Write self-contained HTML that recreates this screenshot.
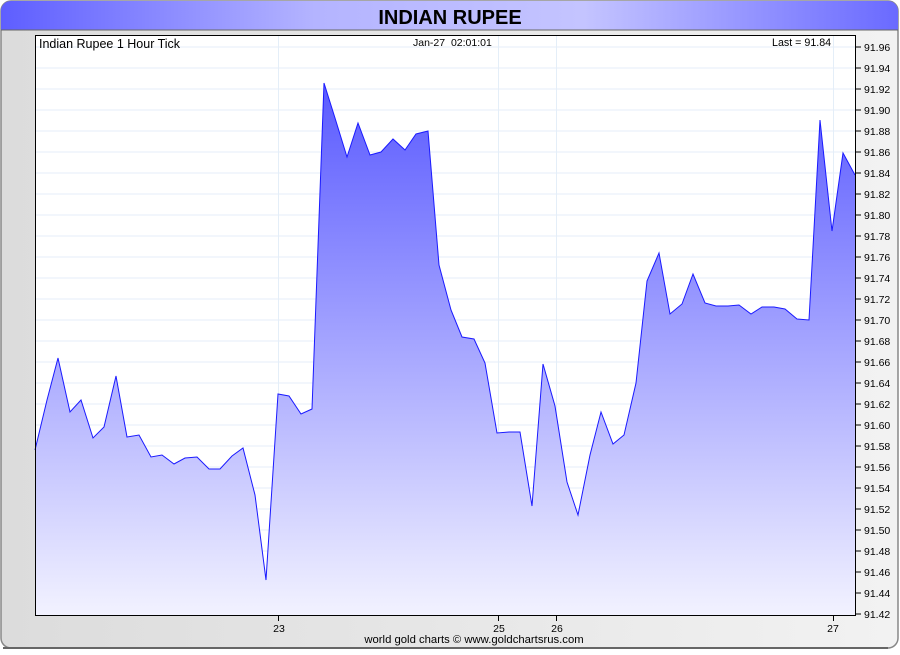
<!DOCTYPE html>
<html><head><meta charset="utf-8"><style>
body{margin:0;width:900px;height:650px;background:#fff;font-family:"Liberation Sans",sans-serif;overflow:hidden}
</style></head><body>
<svg width="900" height="650" xmlns="http://www.w3.org/2000/svg" font-family="Liberation Sans, sans-serif">
<defs>
<linearGradient id="hd" x1="0" x2="1" y1="0" y2="0">
<stop offset="0" stop-color="#5e5eff"/><stop offset="0.35" stop-color="#b4b4ff"/><stop offset="0.65" stop-color="#c4c4ff"/><stop offset="1" stop-color="#6a6aff"/></linearGradient>
<linearGradient id="bg" x1="0" x2="1" y1="0" y2="0">
<stop offset="0" stop-color="#dcdcdc"/><stop offset="1" stop-color="#f2f2f2"/></linearGradient>
<linearGradient id="fl" x1="0" x2="0" y1="0" y2="1">
<stop offset="0" stop-color="#5a5aff"/><stop offset="1" stop-color="#f2f2ff"/></linearGradient>
</defs>
<rect x="1" y="1" width="897" height="647" rx="10" fill="url(#bg)" stroke="#888" stroke-width="1.5"/>
<path d="M3 648 H888" stroke="#666" stroke-width="2"/>
<path d="M1 30 V11 A10 10 0 0 1 11 1 H888 A10 10 0 0 1 898 11 V30 Z" fill="url(#hd)"/>
<line x1="1" y1="30" x2="898" y2="30" stroke="#666"/>
<text x="450" y="24" text-anchor="middle" font-size="20" font-weight="bold" fill="#000">INDIAN RUPEE</text>
<rect x="35.5" y="35.5" width="820" height="580" fill="#fff"/>
<g stroke="#e4eef8" stroke-width="1">
<path d="M36 47H855M36 68H855M36 89H855M36 110H855M36 131H855M36 152H855M36 173H855M36 194H855M36 215H855M36 236H855M36 257H855M36 278H855M36 299H855M36 320H855M36 341H855M36 362H855M36 383H855M36 404H855M36 425H855M36 446H855M36 467H855M36 488H855M36 509H855M36 530H855M36 551H855M36 572H855M36 593H855"/>
<path d="M278.5 36V615M498.5 36V615M556.5 36V615M833.5 36V615"/>
</g>
<path d="M35,450 L47,400 L58,358 L70,412 L81,400 L93,438 L104,427 L116,376 L127,437 L139,435 L151,457 L162,455 L174,464 L185,458 L197,457 L209,469 L220,469 L232,456 L243,448 L255,495 L266,580 L278,394 L289,396 L301,414 L312,409 L324,83 L335,118 L347,157 L358,123 L370,155 L381,152 L393,139 L405,150 L416,134 L428,131 L439,265 L451,310 L462,337 L474,339 L485,363 L497,433 L509,432 L520,432 L532,506 L543,364 L555,406 L567,482 L578,515 L590,455 L601,412 L613,444 L624,435 L636,383 L647,281 L659,253 L670,314 L682,304 L693,274 L705,303 L716,306 L728,306 L739,305 L751,314 L762,307 L774,307 L785,309 L797,319 L809,320 L820,120 L832,231 L843,153 L855,175 L855,615 L35,615 Z" fill="url(#fl)"/>
<path d="M35,450 L47,400 L58,358 L70,412 L81,400 L93,438 L104,427 L116,376 L127,437 L139,435 L151,457 L162,455 L174,464 L185,458 L197,457 L209,469 L220,469 L232,456 L243,448 L255,495 L266,580 L278,394 L289,396 L301,414 L312,409 L324,83 L335,118 L347,157 L358,123 L370,155 L381,152 L393,139 L405,150 L416,134 L428,131 L439,265 L451,310 L462,337 L474,339 L485,363 L497,433 L509,432 L520,432 L532,506 L543,364 L555,406 L567,482 L578,515 L590,455 L601,412 L613,444 L624,435 L636,383 L647,281 L659,253 L670,314 L682,304 L693,274 L705,303 L716,306 L728,306 L739,305 L751,314 L762,307 L774,307 L785,309 L797,319 L809,320 L820,120 L832,231 L843,153 L855,175" fill="none" stroke="#1a1aff" stroke-width="1"/>
<rect x="35.5" y="35.5" width="820" height="580" fill="none" stroke="#000" stroke-width="1"/>
<text x="39" y="48" font-size="12.5" fill="#000">Indian Rupee 1 Hour Tick</text>
<text x="413" y="46" font-size="10.5" fill="#000" xml:space="preserve">Jan-27  02:01:01</text>
<text x="772" y="46" font-size="10.7" fill="#000">Last = 91.84</text>
<g font-size="10.5" fill="#000" stroke="none">
<text x="864" y="51">91.96</text><text x="864" y="72">91.94</text><text x="864" y="93">91.92</text><text x="864" y="114">91.90</text><text x="864" y="135">91.88</text><text x="864" y="156">91.86</text><text x="864" y="177">91.84</text><text x="864" y="198">91.82</text><text x="864" y="219">91.80</text><text x="864" y="240">91.78</text><text x="864" y="261">91.76</text><text x="864" y="282">91.74</text><text x="864" y="303">91.72</text><text x="864" y="324">91.70</text><text x="864" y="345">91.68</text><text x="864" y="366">91.66</text><text x="864" y="387">91.64</text><text x="864" y="408">91.62</text><text x="864" y="429">91.60</text><text x="864" y="450">91.58</text><text x="864" y="471">91.56</text><text x="864" y="492">91.54</text><text x="864" y="513">91.52</text><text x="864" y="534">91.50</text><text x="864" y="555">91.48</text><text x="864" y="576">91.46</text><text x="864" y="597">91.44</text><text x="864" y="618">91.42</text>
</g>
<path d="M856 47h5M856 68h5M856 89h5M856 110h5M856 131h5M856 152h5M856 173h5M856 194h5M856 215h5M856 236h5M856 257h5M856 278h5M856 299h5M856 320h5M856 341h5M856 362h5M856 383h5M856 404h5M856 425h5M856 446h5M856 467h5M856 488h5M856 509h5M856 530h5M856 551h5M856 572h5M856 593h5M856 614h5" stroke="#000"/>
<path d="M278.5 616v5M498.5 616v5M556.5 616v5M833.5 616v5" stroke="#000"/>
<g font-size="10.5" fill="#000" text-anchor="middle">
<text x="279" y="632">23</text><text x="499" y="632">25</text><text x="557" y="632">26</text><text x="833" y="632">27</text>
</g>
<text x="474" y="643" text-anchor="middle" font-size="11.3" fill="#000">world gold charts © www.goldchartsrus.com</text>
</svg>
</body></html>
